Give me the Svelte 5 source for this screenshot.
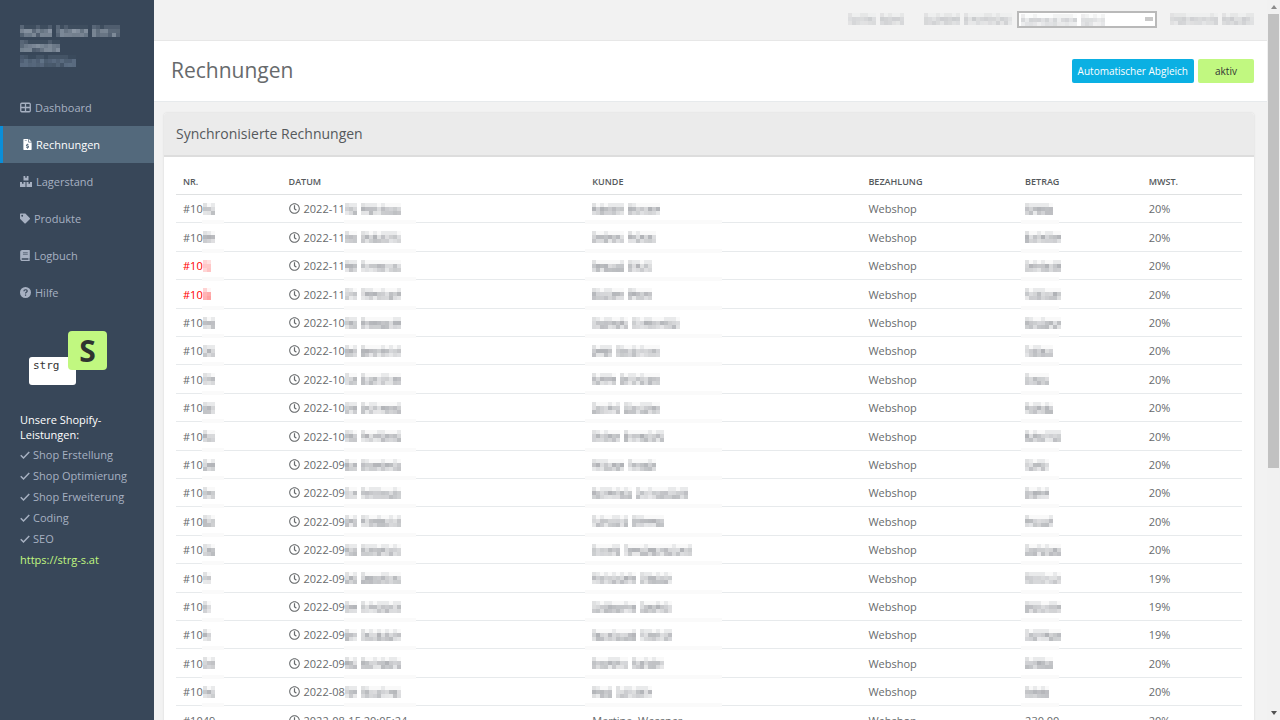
<script>
  const nav = [
    { label: 'Dashboard', icon: 'grid' },
    { label: 'Rechnungen', icon: 'invoice', active: true },
    { label: 'Lagerstand', icon: 'boxes' },
    { label: 'Produkte', icon: 'tag' },
    { label: 'Logbuch', icon: 'book' },
    { label: 'Hilfe', icon: 'help' }
  ];
  const services = ['Shop Erstellung', 'Shop Optimierung', 'Shop Erweiterung', 'Coding', 'SEO'];
  const columns = ['Nr.', 'Datum', 'Kunde', 'Bezahlung', 'Betrag', 'MwSt.'];

  // month, word lengths of the masked customer, length of the masked amount, tax, masked number length
  const rows = [
    ['11', [8, 8], 7, 20, 3],
    ['11', [8, 7], 9, 20, 3],
    ['11', [8, 6], 9, 20, 2, true],
    ['11', [8, 6], 9, 20, 2, true],
    ['10', [9, 12], 9, 20, 3],
    ['10', [5, 11], 7, 20, 3],
    ['10', [6, 10], 6, 20, 3],
    ['10', [7, 9], 7, 20, 3],
    ['10', [7, 10], 9, 20, 3],
    ['09', [8, 7], 6, 20, 3],
    ['09', [10, 13], 6, 20, 3],
    ['09', [9, 8], 7, 20, 3],
    ['09', [7, 17], 9, 20, 3],
    ['09', [11, 8], 9, 19, 2],
    ['09', [11, 8], 9, 19, 2],
    ['09', [11, 8], 9, 19, 2],
    ['09', [9, 8], 7, 20, 3],
    ['08', [5, 9], 6, 20, 3]
  ].map(([month, customer, amount, tax, nr, open]) => ({ month, customer, amount, tax, nr, open }));

  // Builds the 4px tiles that stand in for masked words.
  function tiles(words, seed) {
    const out = [];
    let s = seed * 7919 + 17;
    const rnd = () => {
      s = (s * 1103515245 + 12345) % 2147483648;
      return s / 2147483648;
    };
    let x = 0;
    for (const w of words) {
      for (let i = 0; i < w; i++, x++) {
        out.push({ x, y: 0, o: i === 0 ? 0.2 : rnd() < 0.4 ? 0.14 : 0.04 });
        out.push({ x, y: 1, o: 0.2 + rnd() * 0.3 });
        out.push({ x, y: 2, o: 0.14 + rnd() * 0.3 });
      }
      x++;
    }
    return { out, width: (x - 1) * 4 };
  }
</script>

{#snippet mask(words, seed, tone)}
  {@const t = tiles(words, seed)}
  <svg class="mask {tone}" width={t.width} height="12" aria-hidden="true" shape-rendering="crispEdges">
    {#each t.out as r}
      <rect x={r.x * 4} y={r.y * 4} width="4" height="4" opacity={r.o} />
    {/each}
  </svg>
{/snippet}

{#snippet icon(name)}
  {#if name === 'grid'}
    <svg width="11" height="11" viewBox="0 0 22 22" fill="none" stroke="currentColor" stroke-width="2.6"><rect x="1.5" y="2.5" width="19" height="17" rx="2" /><path d="M11 2.5v17M1.5 11h19" /></svg>
  {:else if name === 'invoice'}
    <svg class="inset" width="9" height="11" viewBox="0 0 384 512" fill="currentColor"><path fill-rule="evenodd" d="M24 0h200v136c0 13 11 24 24 24h136v328c0 13-11 24-24 24H24c-13 0-24-11-24-24V24C0 11 11 0 24 0zm232 0 128 128H256zM64 64v32h96V64zm108 156v30c-40 6-58 32-50 62 8 28 38 32 66 42 28 9 22 28 0 28-18 0-28-6-42-16l-24 28c16 14 30 20 50 24v30h38v-30c42-6 62-34 52-68-8-26-36-34-64-42-30-8-24-28-4-28 14 0 24 4 38 12l22-28c-14-10-26-14-44-18v-26z" /></svg>
  {:else if name === 'boxes'}
    <svg width="12" height="11" viewBox="0 0 24 22" fill="currentColor"><path d="M7 0h3.500v4l1.500-1 1.500 1V0H17v9H7zM0 12h4v4l1.500-1L7 16v-4h4v10H0zM13 12h4v4l1.500-1 1.500 1v-4h4v10H13z" /></svg>
  {:else if name === 'tag'}
    <svg width="10" height="11" viewBox="0 0 512 512" fill="currentColor"><path fill-rule="evenodd" d="M0 252V48C0 21 21 0 48 0h204c13 0 25 5 34 14l212 212c19 19 19 49 0 68L294 498c-19 19-49 19-68 0L14 286c-9-9-14-21-14-34zM112 64a48 48 0 1 0 0 96 48 48 0 0 0 0-96z" /></svg>
  {:else if name === 'book'}
    <svg width="10" height="11" viewBox="0 0 448 512" fill="currentColor"><path fill-rule="evenodd" d="M96 0h328c13 0 24 11 24 24v336c0 8-3 14-9 19-4 15-4 54 0 69 8 7 9 14 9 22v18c0 14-11 24-24 24H96c-53 0-96-43-96-96V96C0 43 43 0 96 0zm32 120v32h224v-32zm0 72v32h224v-32zM96 384c-42 0-42 64 0 64h286v-64z" /></svg>
  {:else if name === 'help'}
    <svg width="11" height="11" viewBox="0 0 22 22"><circle cx="11" cy="11" r="11" fill="currentColor" /><path d="M7.800 8.500c0-4 6.600-4 6.600-.3 0 2.500-3.300 2.300-3.300 4.700M11.100 15v2.500" fill="none" stroke="#384759" stroke-width="2.400" /></svg>
  {:else if name === 'check'}
    <svg width="10" height="10" viewBox="0 0 20 20" fill="none" stroke="currentColor" stroke-width="3"><path d="m1.500 10.500 5.500 5.500L18.500 4" /></svg>
  {:else if name === 'clock'}
    <svg class="clock" width="11" height="11" viewBox="0 0 512 512" fill="currentColor"><path d="M256 8C119 8 8 119 8 256s111 248 248 248 248-111 248-248S393 8 256 8zm0 448c-110.500 0-200-89.500-200-200S145.500 56 256 56s200 89.500 200 200-89.500 200-200 200zm61.800-104.400l-84.900-61.700c-3.100-2.300-4.900-5.900-4.900-9.700V116c0-6.600 5.400-12 12-12h32c6.600 0 12 5.400 12 12v141.700l66.800 48.600c5.400 3.900 6.500 11.400 2.600 16.800L334.600 349c-3.900 5.300-11.400 6.500-16.800 2.600z" /></svg>
  {/if}
{/snippet}

<div class="shell">
  <aside>
    <div class="shop">
      {@render mask([8, 8, 7], 3, 'pale')}
      {@render mask([10], 8, 'pale')}
      {@render mask([14], 12, 'dim')}
    </div>
    <nav>
      {#each nav as item}
        <a href="#{item.label}" class:active={item.active}>{@render icon(item.icon)}<span>{item.label}</span></a>
      {/each}
    </nav>
    <div class="logo"><span class="white">strg</span><span class="green">S</span></div>
    <div class="services">
      <p>Unsere Shopify-<br />Leistungen:</p>
      <ul>
        {#each services as s}
          <li>{@render icon('check')}<span>{s}</span></li>
        {/each}
      </ul>
      <a href="https://strg-s.at">https://strg-s.at</a>
    </div>
  </aside>

  <main>
    <div class="topbar">
      <span class="first">{@render mask([7, 6], 5, 'soft')}</span>
      <label for="shop">{@render mask([9, 12], 6, 'soft')}</label>
      <span class="picker">
        <select id="shop"><option></option></select>
        <span class="cover">{@render mask([14, 6], 7, 'soft')}</span>
        <span class="caret"></span>
      </span>
      <a class="logout" href="#logout">{@render mask([12, 8], 9, 'soft')}</a>
    </div>

    <header>
      <h1>Rechnungen</h1>
      <div class="actions">
        <button type="button" class="sync">Automatischer Abgleich</button>
        <button type="button" class="on">aktiv</button>
      </div>
    </header>

    <section>
      <h2>Synchronisierte Rechnungen</h2>
      <div class="body">
        <table>
          <colgroup>
            <col class="c1" /><col class="c2" /><col class="c3" /><col class="c4" /><col class="c5" /><col />
          </colgroup>
          <thead>
            <tr>{#each columns as c}<th scope="col">{c}</th>{/each}</tr>
          </thead>
          <tbody>
            {#each rows as r, i}
              <tr>
                <td class:open={r.open}><div class="cell">#10{@render mask([r.nr], i + 20, r.open ? 'red' : 'grey')}</div><i class="band nr"></i></td>
                <td><div class="cell">{@render icon('clock')}2022-{r.month}{@render mask([3, 10], i + 50, 'grey')}</div><i class="band date"></i></td>
                <td><div class="cell">{@render mask(r.customer, i + 90, 'grey')}</div><i class="band customer"></i></td>
                <td>Webshop</td>
                <td><div class="cell">{@render mask([r.amount], i + 130, 'grey')}</div><i class="band amount"></i></td>
                <td>{r.tax}%</td>
              </tr>
            {/each}
            <tr>
              <td>#1049</td>
              <td><div class="cell">{@render icon('clock')}2022-08-15 20:05:24</div></td>
              <td>Martina, Wessner</td>
              <td>Webshop</td>
              <td>230,00</td>
              <td>20%</td>
            </tr>
          </tbody>
        </table>
      </div>
    </section>
  </main>

  <div class="scroll" aria-hidden="true">
    <svg width="12" height="14" viewBox="0 0 12 14"><path d="M3 9h6L6 5z" fill="#8b8b8b" /></svg>
    <div class="thumb"></div>
    <svg width="12" height="14" viewBox="0 0 12 14"><path d="M3 5h6L6 9z" fill="#505050" /></svg>
  </div>
</div>

<style>
  :global(body) { margin: 0; background: #f2f2f2; }
  .shell {
    display: flex;
    height: 100vh;
    overflow: hidden;
    font-family: "Open Sans", "Noto Sans", sans-serif;
    font-size: 11px;
    color: #676a6c;
  }
  svg { display: block; flex: none; }
  a { text-decoration: none; }

  aside { width: 154px; flex: none; background: #384759; color: #a7b1c2; }
  .shop { display: flex; flex-direction: column; align-items: flex-start; gap: 3px; height: 64px; padding: 25px 20px 0; }
  nav a { display: flex; align-items: center; gap: 4px; height: 37px; box-sizing: border-box; padding-left: 20px; color: inherit; }
  nav a.active { color: #fff; background: #53697c; border-left: 3px solid #0a8ed8; padding-left: 17px; }
  .inset { margin-left: 3px; }

  .logo { position: relative; height: 56px; margin: 20px 0 0 29px; }
  .logo .white {
    position: absolute; left: 0; top: 26px; width: 47px; height: 28px; box-sizing: border-box; padding: 2px 0 0 4px;
    border-radius: 3px; background: #fff; color: #333; font: 11px/14px "DejaVu Sans Mono", monospace;
  }
  .logo .green {
    position: absolute; left: 39px; top: 0; width: 39px; height: 39px; border-radius: 4px;
    background: #c1f880; color: #2f3430; font-size: 30px; font-weight: 700; line-height: 39px; text-align: center;
  }
  .services { padding: 25px 0 0 20px; }
  .services p { margin: 0 0 2px; line-height: 15px; color: #fff; }
  ul { list-style: none; margin: 0; padding: 0; }
  li { display: flex; align-items: center; gap: 3px; height: 21px; }
  .services a { display: block; line-height: 21px; color: #c1f880; }

  main { flex: 1; min-width: 0; }
  .topbar { display: flex; align-items: center; justify-content: flex-end; height: 38px; padding: 0 13px 2px 0; border-bottom: 1px solid #e7e7e7; }
  .topbar .first { margin-right: 20px; }
  .topbar label { margin-right: 5px; }
  .picker { position: relative; display: block; height: 17px; margin-right: 13px; }
  select { appearance: none; display: block; width: 140px; height: 17px; margin: 0; border: 2px solid #b9b9b9; border-radius: 0; background: #fff; }
  .cover { position: absolute; left: 4px; top: 3px; }
  .caret { position: absolute; right: 4px; top: 6px; width: 8px; height: 4px; background: #c9c9c9; }

  header { display: flex; align-items: center; justify-content: space-between; height: 60px; padding: 0 13px 0 17px; background: #fff; border-bottom: 1px solid #e7eaec; }
  h1 { margin: 0 0 2px; font-size: 21px; font-weight: 400; }
  .actions { display: flex; gap: 4px; }
  button { height: 24px; padding: 0 6px; border: 0; border-radius: 2px; font: 10px "Open Sans", sans-serif; }
  .sync { background: #0bb0e3; color: #fff; }
  .on { width: 56px; background: #c1f880; color: #333; }

  section { margin: 11px 13px 0 10px; background: #fff; border-radius: 3px 3px 0 0; box-shadow: 0 0 2px #d0d0d0; }
  h2 { margin: 0; padding: 0 12px; font-size: 14px; font-weight: 400; line-height: 42px; color: #55595c; background: #ebebeb; border-bottom: 2px solid #ddd; border-radius: 3px 3px 0 0; }
  .body { padding: 12px 12px 0; }
  table { width: 100%; table-layout: fixed; border-collapse: separate; border-spacing: 0; }
  .c1 { width: 9.9%; }
  .c2 { width: 28.5%; }
  .c3 { width: 25.9%; }
  .c4 { width: 14.7%; }
  .c5 { width: 11.6%; }
  th { height: 25px; padding: 0 7px; border-bottom: 1px solid #dfe1e2; text-align: left; text-transform: uppercase; font-size: 9px; font-weight: 600; color: #55595c; }
  td { position: relative; height: 27px; padding: 0 7px; border-bottom: 1px solid #e7eaec; white-space: nowrap; }
  tr:nth-child(5n + 2) td, tr:nth-child(5n + 4) td { height: 28px; }
  td.open { color: #f00; }
  .cell { display: flex; align-items: center; }
  .clock { margin-right: 4px; }
  .band { position: absolute; bottom: -2px; height: 4px; background: #fafafa; }
  .nr { left: 26px; width: 22px; }
  .date { left: 62px; width: 72px; }
  .customer { left: 0; width: 137px; }
  .amount { left: 3px; width: 38px; }

  .mask.grey { fill: #63676f; }
  .mask.red { fill: #f22; }
  .mask.soft { fill: #a4a7ac; }
  .mask.pale { fill: #dce5ee; }
  .mask.dim { fill: #8ba0b8; }

  .scroll { display: flex; flex-direction: column; width: 12px; flex: none; padding-left: 1px; background: #f1f1f1; }
  .thumb { flex: none; height: 63%; margin: 0 1px 0 0; background: #c1c1c1; }
  .scroll svg:last-child { margin-top: auto; }
</style>
